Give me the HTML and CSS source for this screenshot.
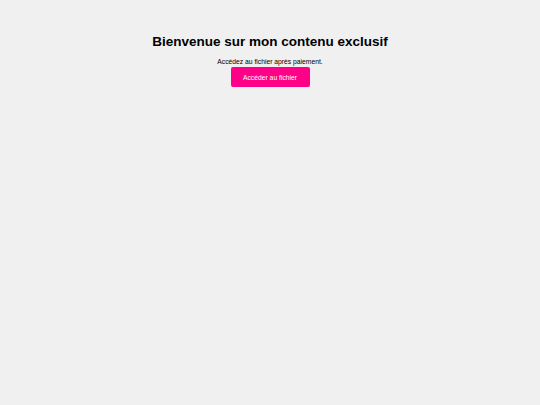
FILE: index.html
```html
<!DOCTYPE html>
<html lang="fr">
<head>
<meta charset="utf-8">
<title>Contenu exclusif</title>
<link rel="stylesheet" href="styles.css">
</head>
<body>
<main class="page">
  <h1 class="title">Bienvenue sur mon contenu exclusif</h1>
  <p class="lead">Accédez au fichier après paiement.</p>
  <a class="btn" href="#">Accéder au fichier</a>
</main>
</body>
</html>
```

FILE: styles.css
```css
html, body {
  margin: 0;
  padding: 0;
  background: #f0f0f0;
}
body {
  width: 540px;
  height: 405px;
  font-family: "Liberation Sans", Arial, sans-serif;
  color: #000;
}
.page {
  display: flex;
  flex-direction: column;
  align-items: center;
  padding-top: 34px;
}
.title {
  font-size: 13.5px;
  font-weight: bold;
  line-height: 16px;
  margin: 0 0 8px;
}
.lead {
  font-size: 6.75px;
  line-height: 8px;
  margin: 0 0 1px;
}
.btn {
  display: flex;
  align-items: center;
  justify-content: center;
  width: 79px;
  height: 20px;
  background: #ff0088;
  color: #fff;
  font-size: 6.75px;
  text-decoration: none;
  border-radius: 2px;
}
```
